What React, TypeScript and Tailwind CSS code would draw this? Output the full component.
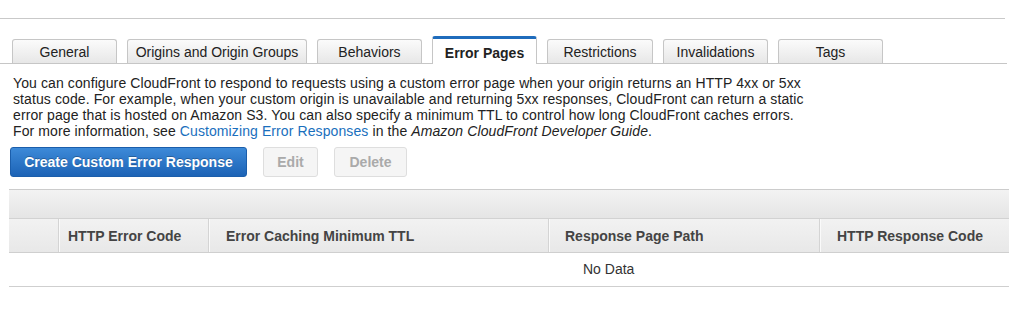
import React from "react";

const tabs = [
  { label: "General", w: "w-[105px]" },
  { label: "Origins and Origin Groups", w: "w-[180px]" },
  { label: "Behaviors", w: "w-[105px]" },
  { label: "Error Pages", w: "w-[105px]", active: true },
  { label: "Restrictions", w: "w-[106px]" },
  { label: "Invalidations", w: "w-[105px]" },
  { label: "Tags", w: "w-[105px]" },
];

export default function App() {
  return (
    <div className="w-[1009px] h-[313px] overflow-hidden bg-white text-[14px] text-[#222] font-['Liberation_Sans',Arial,sans-serif]">
      <div className="mt-[18px] w-[1005px] border-t border-[#c9c9c9]" />

      {/* tabs */}
      <div className="flex items-end gap-[10px] h-[45px] pl-[12px] w-[1007px] border-b border-[#c6c6c6]">
        {tabs.map((t) =>
          t.active ? (
            <div
              key={t.label}
              className={`${t.w} h-[28px] -mb-px flex items-center justify-center pt-[3px] bg-white border-x border-[#c6c6c6] border-t-[3px] border-t-[#1f6cbc] rounded-t-[3px] font-bold text-[#222]`}
            >
              {t.label}
            </div>
          ) : (
            <div
              key={t.label}
              className={`${t.w} h-[24px] flex items-center justify-center pt-[2px] bg-gradient-to-b from-[#fbfbfb] to-[#e7e7e7] border-x border-t border-[#c6c6c6] rounded-t-[3px] text-[#222]`}
            >
              {t.label}
            </div>
          )
        )}
      </div>

      {/* description */}
      <div className="px-[10px]">
        <p className="mt-[11px] pl-[3px] w-[800px] leading-[16px] tracking-[0.1px]">
          {"You can configure CloudFront to respond to requests using a custom error page when your origin returns an HTTP 4xx or 5xx status code. For example, when your custom origin is unavailable and returning 5xx responses, CloudFront can return a static error page that is hosted on Amazon S3. You can also specify a minimum TTL to control how long CloudFront caches errors. For more information, see "}
          <a className="text-[#1a6fbd]">Customizing Error Responses</a>
          {" in the "}
          <i>Amazon CloudFront Developer Guide</i>
          {"."}
        </p>

        <div className="mt-[8px] flex gap-[16px]">
          <button className="w-[237px] h-[30px] rounded-[3px] border border-[#1b5eab] bg-gradient-to-b from-[#3d8ad8] to-[#1c63b6] text-white font-bold [text-shadow:0_-1px_0_rgba(0,0,0,0.25)]">
            Create Custom Error Response
          </button>
          <button className="w-[55px] h-[30px] rounded-[3px] border border-[#dedede] bg-[#f5f5f5] text-[#aaaaaa] font-bold">
            Edit
          </button>
          <button className="w-[73px] h-[30px] rounded-[3px] border border-[#dedede] bg-[#f5f5f5] text-[#aaaaaa] font-bold">
            Delete
          </button>
        </div>
      </div>

      {/* table */}
      <div className="mt-[12px] ml-[9px] w-[1000px]">
        <div className="h-[30px] border-t border-[#cccccc] border-b border-b-[#d2d2d2] bg-gradient-to-b from-[#f3f3f3] to-[#e5e5e5]" />
        <div className="flex h-[34px] border-b border-[#cfcfcf] bg-gradient-to-b from-[#f2f2f2] to-[#e8e8e8] font-bold text-[#444]">
          <div className="w-[49px]" />
          <div className="w-[150px] flex items-center pt-[1px] pl-[9px] border-l border-[#d4d4d4] shadow-[inset_1px_0_0_#fafafa]">HTTP Error Code</div>
          <div className="w-[340px] flex items-center pt-[1px] pl-[17px] border-l border-[#d4d4d4] shadow-[inset_1px_0_0_#fafafa]">Error Caching Minimum TTL</div>
          <div className="w-[271px] flex items-center pt-[1px] pl-[16px] border-l border-[#d4d4d4] shadow-[inset_1px_0_0_#fafafa]">Response Page Path</div>
          <div className="flex-1 flex items-center pt-[1px] pl-[17px] border-l border-[#d4d4d4] shadow-[inset_1px_0_0_#fafafa]">HTTP Response Code</div>
        </div>
        <div className="h-[34px] flex items-center pl-[574px] border-b border-[#cfcfcf] text-[#333]">No Data</div>
      </div>
    </div>
  );
}
